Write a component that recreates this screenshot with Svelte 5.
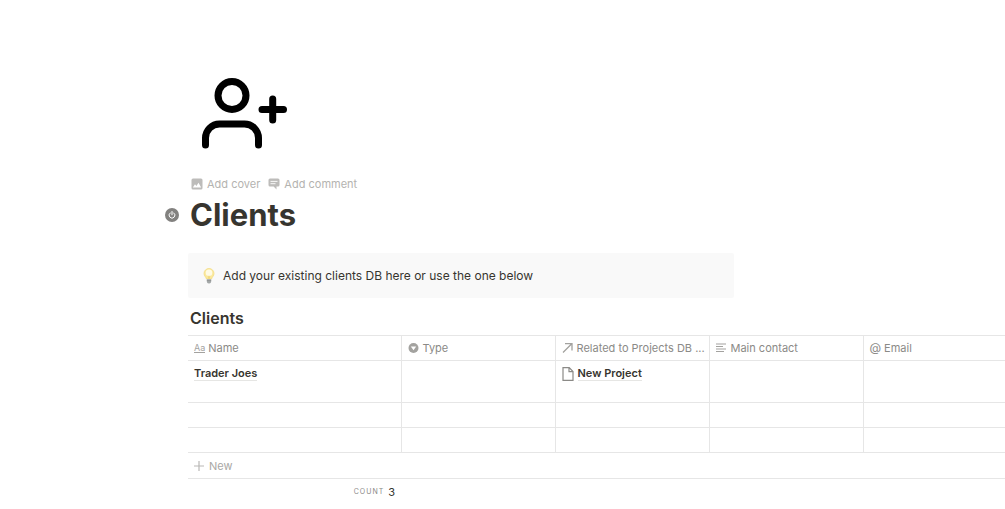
<script lang="ts">
    interface Column {
        label: string;
        icon: string;
    }

    interface Client {
        name: string;
        project: string;
    }

    const columns: Column[] = [
        { label: 'Name', icon: 'title' },
        { label: 'Type', icon: 'select' },
        { label: 'Related to Projects DB ...', icon: 'relation' },
        { label: 'Main contact', icon: 'text' },
        { label: 'Email', icon: 'email' }
    ];

    const clients: Client[] = [
        { name: 'Trader Joes', project: 'New Project' },
        { name: '', project: '' },
        { name: '', project: '' }
    ];
</script>

<main>
    <!-- Page header -->
    <svg class="page-icon" viewBox="0 0 112 100" aria-hidden="true">
        <g fill="none" stroke="#000" stroke-width="7" stroke-linecap="round">
            <circle cx="44" cy="35.5" r="14" />
            <path d="M17.5 85v-7a14 14 0 0 1 14-14h25a14 14 0 0 1 14 14v7" />
            <path d="M74 49.5h21.500M84.700 39v21" />
        </g>
    </svg>

    <div class="page-controls">
        <button>
            <svg width="12" height="12" viewBox="0 0 12 12" aria-hidden="true">
                <path fill="#bdbcba" fill-rule="evenodd" d="M2 .5h8A1.500 1.500 0 0 1 11.500 2v8A1.500 1.500 0 0 1 10 11.500H2A1.500 1.500 0 0 1 .5 10V2A1.500 1.500 0 0 1 2 .5zM1.800 9.500h8.400L7.500 4.800 5.400 8 4 6.300z" />
            </svg>
            Add cover
        </button>
        <button>
            <svg width="12" height="12" viewBox="0 0 12 12" aria-hidden="true">
                <path fill="#bdbcba" d="M2 .5h8A1.500 1.500 0 0 1 11.500 2V7A1.500 1.500 0 0 1 10 8.500H8.500V11.500L5.600 8.500H2A1.500 1.500 0 0 1 .5 7V2A1.500 1.500 0 0 1 2 .5z" />
                <path stroke="#fff" stroke-width=".9" d="M2.500 3.400h7M2.500 5.700h5" />
            </svg>
            Add comment
        </button>
    </div>

    <div class="title-row">
        <button class="power" aria-label="Page actions">
            <svg width="14" height="14" viewBox="0 0 14 14" aria-hidden="true">
                <circle cx="7" cy="7" r="7" fill="#82817f" />
                <path d="M5.200 4.900a2.900 2.900 0 1 0 3.600 0M7 3.500v3.300" fill="none" stroke="#fff" stroke-width="1" stroke-linecap="round" />
            </svg>
        </button>
        <h1>Clients</h1>
    </div>

    <!-- Callout -->
    <div class="callout">
        <svg width="12" height="16" viewBox="0 0 12 16" aria-hidden="true">
            <path d="M6 .5a5 5 0 0 0-5 5c0 2.500 2 3.500 2.500 5.500h5C9 9 11 8 11 5.500a5 5 0 0 0-5-5z" fill="#fbe99c" stroke="#f3dc85" stroke-width=".8" />
            <ellipse cx="6" cy="4.800" rx="3.300" ry="3.400" fill="#fffbe5" />
            <path d="M5 7.500l1 3 1-3" fill="none" stroke="#e8c85e" stroke-width=".5" />
            <path d="M3.800 11h4.400v2.700L7 15.500H5l-1.200-1.800z" fill="#b4b8b8" />
            <path d="M3.800 12.500h4.400M4 14h4" stroke="#7d8182" stroke-width=".6" />
        </svg>
        <span>Add your existing clients DB here or use the one below</span>
    </div>

    <!-- Clients table -->
    <h2>Clients</h2>
    <table>
        <colgroup>
            <col class="col-name" />
            <col class="col-field" />
            <col class="col-field" />
            <col class="col-field" />
            <col />
        </colgroup>
        <thead>
            <tr>
                {#each columns as column}
                    <th>
                        <div class="head">
                            {#if column.icon === 'title'}
                                <span class="aa" aria-hidden="true">Aa</span>
                            {:else if column.icon === 'email'}
                                <span class="at" aria-hidden="true">@</span>
                            {:else}
                                <svg width="12" height="12" viewBox="0 0 12 12" aria-hidden="true">
                                    {#if column.icon === 'select'}
                                        <circle cx="5.500" cy="6" r="5" fill="#a3a29f" />
                                        <path d="M2.800 4.500h5.400L5.500 8.200z" fill="#fff" />
                                    {:else if column.icon === 'relation'}
                                        <path d="M1 10.500L9.500 2M3 1.600h7v7" fill="none" stroke="#a3a29f" stroke-width="1.300" />
                                    {:else}
                                        <path d="M0 2h10M0 4.500h7M0 7h10M0 9.500h8" stroke="#a3a29f" stroke-width="1.200" />
                                    {/if}
                                </svg>
                            {/if}
                            <span>{column.label}</span>
                        </div>
                    </th>
                {/each}
            </tr>
        </thead>
        <tbody>
            {#each clients as client}
                <tr class:filled={client.name}>
                    <td>
                        {#if client.name}
                            <a href="#client">{client.name}</a>
                        {/if}
                    </td>
                    <td></td>
                    <td>
                        {#if client.project}
                            <div class="relation">
                                <svg width="12" height="14" viewBox="0 0 12 14" aria-hidden="true">
                                    <path d="M1 .7h6.200L11 4.500v8.800H1zM7 .7v4h4" fill="none" stroke="#8b8a87" stroke-width="1.200" />
                                </svg>
                                <a href="#project">{client.project}</a>
                            </div>
                        {/if}
                    </td>
                    <td></td>
                    <td></td>
                </tr>
            {/each}
        </tbody>
    </table>

    <button class="new-row">
        <svg width="10" height="10" viewBox="0 0 10 10" aria-hidden="true">
            <path d="M5 0v10M0 5h10" stroke="#b9b8b6" stroke-width="1.200" />
        </svg>
        New
    </button>

    <div class="count">
        <span>COUNT</span>
        <strong>3</strong>
    </div>
</main>

<style>
    :global(body) {
        margin: 0;
        background: #fff;
    }

    main {
        padding: 60px 0 0 188px;
        color: #37352f;
        font-family: Inter, 'Liberation Sans', sans-serif;
        font-size: 11px;
        line-height: 16px;
    }

    button {
        padding: 0;
        border: 0;
        background: none;
        font: inherit;
        cursor: pointer;
    }

    svg {
        display: block;
        flex: none;
    }

    a {
        display: block;
        width: fit-content;
        color: inherit;
        font-weight: 600;
        line-height: 14px;
        text-decoration: none;
        border-bottom: 1px solid #e6e6e4;
    }

    /* Page header */
    .page-icon {
        width: 112px;
        height: 100px;
    }

    .page-controls {
        display: flex;
        gap: 8px;
        padding: 16px 0 0 3px;
    }

    .page-controls button {
        display: flex;
        align-items: center;
        gap: 4px;
        color: #b4b3b0;
    }

    .title-row {
        display: flex;
        align-items: center;
        gap: 11px;
        margin: 3px 0 0 -23px;
    }

    h1 {
        margin: 0;
        font-size: 31px;
        font-weight: 700;
        line-height: 40px;
    }

    /* Callout */
    .callout {
        display: flex;
        align-items: center;
        gap: 8px;
        box-sizing: border-box;
        max-width: 546px;
        margin: 18px 16px 0 0;
        padding: 15px 15px 14px;
        border-radius: 2px;
        background: #f9f9f9;
        font-size: 12px;
    }

    /* Table */
    h2 {
        margin: 9px 0 6px 2px;
        font-size: 16px;
        font-weight: 600;
        line-height: 22px;
    }

    table {
        width: 100%;
        table-layout: fixed;
        border-collapse: collapse;
    }

    .col-name {
        width: 213px;
    }

    .col-field {
        width: 154px;
    }

    th,
    td {
        box-sizing: border-box;
        height: 25px;
        padding: 0 6px;
        border: 1px solid #e6e6e6;
        text-align: left;
        vertical-align: top;
    }

    th:first-child,
    td:first-child {
        border-left: 0;
    }

    th:last-child,
    td:last-child {
        border-right: 0;
    }

    th {
        color: #8b8a87;
        font-weight: 400;
        vertical-align: middle;
    }

    .filled td {
        height: 42px;
        padding-top: 5px;
    }

    .head,
    .relation {
        display: flex;
        align-items: center;
        gap: 4px;
        white-space: nowrap;
    }

    .head {
        gap: 3px;
    }

    .aa {
        border-bottom: 1px solid #a3a29f;
        color: #a3a29f;
        font-size: 9px;
        line-height: 9px;
    }

    .at {
        color: #8b8a87;
        font-size: 12px;
    }

    .new-row {
        display: flex;
        align-items: center;
        gap: 5px;
        width: 100%;
        height: 26px;
        padding: 0 6px;
        border-bottom: 1px solid #e6e6e6;
        color: #a9a8a5;
    }

    .count {
        display: flex;
        align-items: center;
        justify-content: flex-end;
        gap: 4px;
        width: 207px;
        padding-top: 5px;
    }

    .count span {
        color: #8b8a87;
        font-size: 7px;
        letter-spacing: 1px;
    }

    .count strong {
        font-weight: 400;
    }
</style>
